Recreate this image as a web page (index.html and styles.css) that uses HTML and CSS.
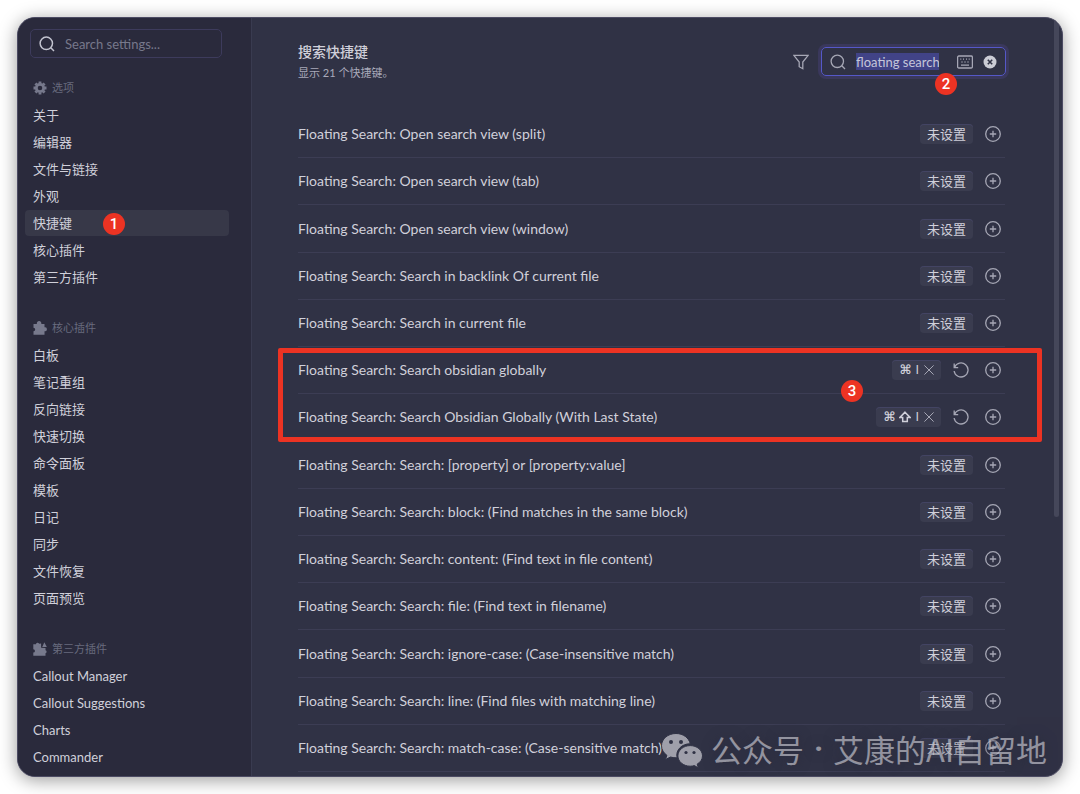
FILE: index.html
```html
<!DOCTYPE html>
<html lang="zh-CN">
<head>
<meta charset="utf-8">
<meta name="viewport" content="width=device-width, initial-scale=1">
<title>快捷键</title>
<link rel="stylesheet" href="styles.css">
</head>
<body>
<svg class="defs" aria-hidden="true">
  <symbol id="search" viewBox="0 0 16 16"><circle cx="7.3" cy="7.3" r="6.2"/><path d="M11.8 11.8 15 15"/></symbol>
  <symbol id="plus" viewBox="0 0 16 16"><circle cx="8" cy="8" r="7.3"/><path d="M8 4.8v6.4M4.8 8h6.4"/></symbol>
  <symbol id="undo" viewBox="0 0 16 16"><path d="M1.2 1.600v4h4M1.500 5.400A7 7 0 1 1 1.100 9"/></symbol>
  <symbol id="cross" viewBox="0 0 10 10"><path d="M.4.4l9.200 9.200M9.600.4.4 9.600"/></symbol>
  <symbol id="puzzle" viewBox="0 0 14 14"><path d="M.5 3h3.400a2.300 2.300 0 1 1 4.400 0h3.200v3.300a2 2 0 1 1 0 3.900v3.500H.5v-3.500a1.700 1.700 0 1 0 0-3.400z"/></symbol>
  <symbol id="puzzles" viewBox="0 0 14 14"><path d="M.3 2.300h2.600a1.700 1.700 0 0 1 3.200-.6l2-.2v4.200l4.400.3v2.300a1.500 1.500 0 0 1 0 2.900v2.500H.3v-3.100a1.600 1.600 0 0 0 0-3.300z"/><path d="M9.200 4.900 11.400.2l2.400 4.700z"/></symbol>
</svg>
<div class="window">
  <nav class="sidebar" aria-label="设置">
    <label class="side-search">
      <svg class="icon"><use href="#search"/></svg>
      <input type="search" placeholder="Search settings..." aria-label="Search settings">
    </label>
    <section class="group">
      <h2 class="group-title"><svg class="group-icon gear" viewBox="0 0 14 14"><circle cx="7" cy="7" r="3.700"/><path d="M7 .5v2M7 11.500v2M.5 7h2M11.500 7h2M2.400 2.400l1.400 1.400M10.200 10.200l1.400 1.400M2.400 11.600l1.400-1.400M10.200 3.800l1.400-1.400"/></svg>选项</h2>
      <a class="item" href="#">关于</a>
      <a class="item" href="#">编辑器</a>
      <a class="item" href="#">文件与链接</a>
      <a class="item" href="#">外观</a>
      <a class="item active" href="#" aria-current="page">快捷键<span class="badge badge-one">1</span></a>
      <a class="item" href="#">核心插件</a>
      <a class="item" href="#">第三方插件</a>
    </section>
    <section class="group">
      <h2 class="group-title"><svg class="group-icon"><use href="#puzzle"/></svg>核心插件</h2>
      <a class="item" href="#">白板</a>
      <a class="item" href="#">笔记重组</a>
      <a class="item" href="#">反向链接</a>
      <a class="item" href="#">快速切换</a>
      <a class="item" href="#">命令面板</a>
      <a class="item" href="#">模板</a>
      <a class="item" href="#">日记</a>
      <a class="item" href="#">同步</a>
      <a class="item" href="#">文件恢复</a>
      <a class="item" href="#">页面预览</a>
    </section>
    <section class="group">
      <h2 class="group-title"><svg class="group-icon"><use href="#puzzles"/></svg>第三方插件</h2>
      <a class="item" href="#">Callout Manager</a>
      <a class="item" href="#">Callout Suggestions</a>
      <a class="item" href="#">Charts</a>
      <a class="item" href="#">Commander</a>
    </section>
  </nav>
  <main class="main">
    <header class="header">
      <div class="heading">
        <h1 class="title">搜索快捷键</h1>
        <p class="subtitle">显示 21 个快捷键。</p>
      </div>
      <button class="icon-button" aria-label="筛选"><svg class="icon" viewBox="0 0 16 16"><path d="M.8 1.300h14.400L9.800 8v6.700l-3.600-2V8z"/></svg></button>
      <div class="search">
        <svg class="icon"><use href="#search"/></svg>
        <input class="search-input" type="text" value="floating search" aria-label="搜索快捷键">
        <button class="icon-button" aria-label="键盘"><svg class="icon" viewBox="0 0 16 16"><rect x=".6" y="2" width="14.800" height="12" rx="1.200"/><path d="M3.300 5.200h1M6 5.200h1M9 5.200h1M11.700 5.200h1M4.500 8h1M7.500 8h1M10.500 8h1M4 11.200h8"/></svg></button>
        <button class="icon-button" aria-label="清除"><svg class="clear" viewBox="0 0 14 14"><circle cx="7" cy="7" r="6.500"/><path d="M4.800 4.800l4.400 4.400M9.200 4.800 4.800 9.200"/></svg></button>
        <span class="badge badge-two">2</span>
      </div>
    </header>
    <ul class="list">
      <li class="row"><span class="name">Floating Search: Open search view (split)</span><span class="key">未设置</span><button class="icon-button" aria-label="添加"><svg class="icon"><use href="#plus"/></svg></button></li>
      <li class="row"><span class="name">Floating Search: Open search view (tab)</span><span class="key">未设置</span><button class="icon-button" aria-label="添加"><svg class="icon"><use href="#plus"/></svg></button></li>
      <li class="row"><span class="name">Floating Search: Open search view (window)</span><span class="key">未设置</span><button class="icon-button" aria-label="添加"><svg class="icon"><use href="#plus"/></svg></button></li>
      <li class="row"><span class="name">Floating Search: Search in backlink Of current file</span><span class="key">未设置</span><button class="icon-button" aria-label="添加"><svg class="icon"><use href="#plus"/></svg></button></li>
      <li class="row"><span class="name">Floating Search: Search in current file</span><span class="key">未设置</span><button class="icon-button" aria-label="添加"><svg class="icon"><use href="#plus"/></svg></button></li>
      <li class="row marked"><span class="name">Floating Search: Search obsidian globally</span><span class="key combo"><span>⌘</span><span class="letter">I</span><button class="icon-button" aria-label="删除"><svg class="cross"><use href="#cross"/></svg></button></span><button class="icon-button undo" aria-label="还原"><svg class="icon"><use href="#undo"/></svg></button><button class="icon-button" aria-label="添加"><svg class="icon"><use href="#plus"/></svg></button><span class="marker"><span class="badge badge-three">3</span></span></li>
      <li class="row"><span class="name">Floating Search: Search Obsidian Globally (With Last State)</span><span class="key combo"><span>⌘</span><svg class="shift" role="img" aria-label="Shift" viewBox="0 0 12 12"><path d="M6 1.200 11 6.400H8.300v4.200H3.700V6.400H1z"/></svg><span class="letter">I</span><button class="icon-button" aria-label="删除"><svg class="cross"><use href="#cross"/></svg></button></span><button class="icon-button undo" aria-label="还原"><svg class="icon"><use href="#undo"/></svg></button><button class="icon-button" aria-label="添加"><svg class="icon"><use href="#plus"/></svg></button></li>
      <li class="row"><span class="name">Floating Search: Search: [property] or [property:value]</span><span class="key">未设置</span><button class="icon-button" aria-label="添加"><svg class="icon"><use href="#plus"/></svg></button></li>
      <li class="row"><span class="name">Floating Search: Search: block: (Find matches in the same block)</span><span class="key">未设置</span><button class="icon-button" aria-label="添加"><svg class="icon"><use href="#plus"/></svg></button></li>
      <li class="row"><span class="name">Floating Search: Search: content: (Find text in file content)</span><span class="key">未设置</span><button class="icon-button" aria-label="添加"><svg class="icon"><use href="#plus"/></svg></button></li>
      <li class="row"><span class="name">Floating Search: Search: file: (Find text in filename)</span><span class="key">未设置</span><button class="icon-button" aria-label="添加"><svg class="icon"><use href="#plus"/></svg></button></li>
      <li class="row"><span class="name">Floating Search: Search: ignore-case: (Case-insensitive match)</span><span class="key">未设置</span><button class="icon-button" aria-label="添加"><svg class="icon"><use href="#plus"/></svg></button></li>
      <li class="row"><span class="name">Floating Search: Search: line: (Find files with matching line)</span><span class="key">未设置</span><button class="icon-button" aria-label="添加"><svg class="icon"><use href="#plus"/></svg></button></li>
      <li class="row"><span class="name">Floating Search: Search: match-case: (Case-sensitive match)</span><span class="key">未设置</span><button class="icon-button" aria-label="添加"><svg class="icon"><use href="#plus"/></svg></button></li>
    </ul>
    <div class="scrollbar"></div>
  </main>
  <div class="watermark">
    <svg class="wechat" viewBox="0 0 42 36"><path d="M15 .5C6.900.5.5 6 .5 12.800c0 3.900 2.100 7.200 5.400 9.500l-1.400 4.200 5-2.500c1.700.5 3.500.8 5.500.8h1.100c-1.900-7.700 4.900-14.300 13.200-14C27.900 4.800 22.200.5 15 .5z"/><path d="M41.500 22.900c0-5.700-5.500-10.300-12.300-10.300S16.900 17.200 16.900 22.900s5.500 10.300 12.300 10.300c1.500 0 2.900-.2 4.200-.6l3.900 2.300-1.100-3.800c3.200-1.900 5.300-4.800 5.300-8.200z"/><g class="eyes"><circle cx="10" cy="9" r="2"/><circle cx="20" cy="9" r="2"/><circle cx="25" cy="19.500" r="1.600"/><circle cx="33" cy="19.500" r="1.600"/></g></svg>
    <span>公众号</span><span class="dot">·</span><span>艾康的AI自留地</span>
  </div>
</div>
</body>
</html>
```
FILE: styles.css
```css
* { box-sizing: border-box; }

body {
  margin: 0;
  height: 100vh;
  padding: 17px;
  background: #fff;
  color: #d0d0da;
  font-family: Lato, "Noto Sans CJK SC", sans-serif;
  font-size: 14px;
  line-height: 20px;
  overflow: hidden;
}

.defs { position: absolute; width: 0; height: 0; }

.window {
  position: relative;
  display: flex;
  height: 100%;
  overflow: hidden;
  border: 1px solid #4c4b63;
  border-radius: 18px;
  background: #303245;
  box-shadow: 0 3px 18px rgba(0, 0, 0, 0.4);
}

svg { display: block; flex: none; fill: none; stroke: currentColor; }
.icon { width: 16px; height: 16px; color: #a6a7b5; stroke-width: 1.3; }

.icon-button {
  display: flex;
  padding: 0;
  border: 0;
  background: none;
  color: inherit;
}

input {
  min-width: 0;
  padding: 0;
  border: 0;
  outline: 0;
  background: none;
  color: inherit;
  font: inherit;
}

.sidebar {
  flex: none;
  width: 234px;
  padding: 11px 22px 0 7px;
  border-right: 1px solid #393b50;
  background: #2a2a3c;
  font-size: 13px;
}

.side-search {
  display: flex;
  align-items: center;
  gap: 10px;
  height: 29px;
  margin: 0 7px 18px 5px;
  padding: 0 8px;
  border: 1px solid #3d3b5c;
  border-radius: 5px;
}
.side-search .icon { color: #c2c3cf; stroke-width: 1.5; }
.side-search input { width: 100%; }
.side-search input::placeholder { color: #77788b; opacity: 1; }

.group { margin-bottom: 26px; }
.group-title {
  display: flex;
  align-items: center;
  gap: 5px;
  height: 24px;
  margin: 0 0 2px;
  padding: 0 8px;
  color: #686a7e;
  font-size: 11px;
  font-weight: 400;
}
.group-icon { width: 14px; height: 14px; fill: #77798c; stroke: none; }
.gear { fill: none; stroke: #77798c; stroke-width: 2.8; }

.item {
  position: relative;
  display: block;
  height: 26px;
  margin-bottom: 1px;
  padding: 0 8px;
  border-radius: 4px;
  color: inherit;
  line-height: 26px;
  text-decoration: none;
}
.active { background: #373848; }

.badge {
  position: absolute;
  width: 22px;
  height: 22px;
  border-radius: 50%;
  background: #ec3323;
  color: #fff;
  font: 500 15px/22px Roboto, sans-serif;
  text-align: center;
}
.badge-one { left: 78px; top: 3px; }
.badge-two { right: 48px; top: 25px; }
.badge-three { right: 174px; top: 27px; }

.main {
  position: relative;
  display: flex;
  flex: 1;
  flex-direction: column;
  min-width: 0;
  padding: 0 57px 4px 46px;
}

.header { display: flex; flex: none; gap: 12px; height: 93px; margin-right: -1px; padding-top: 29px; }
.heading { flex: 1; }
.title { margin: -5px 0 0; font-size: 14px; font-weight: 500; line-height: 20px; }
.subtitle { margin: 2px 0 0; color: #a9aaba; font-size: 11px; line-height: 18px; }
.header > .icon-button { height: 29px; align-items: center; }

.search {
  position: relative;
  display: flex;
  align-items: center;
  gap: 10px;
  width: 185px;
  height: 29px;
  padding: 0 8px;
  border: 1px solid #5558c8;
  border-radius: 5px;
  box-shadow: 0 0 0 3px #3a385c;
  font-size: 13px;
}
.search-input {
  flex: none;
  width: 83px;
  height: 17px;
  margin-right: auto;
  background: #414387;
  color: #c5c6da;
}
.clear { width: 14px; height: 14px; fill: #cbccd5; stroke: none; }
.clear path { stroke: #303245; stroke-width: 1.6; }

.list {
  display: flex;
  flex: 1;
  flex-direction: column;
  margin: 0;
  padding: 0;
  list-style: none;
}
.row {
  position: relative;
  display: flex;
  flex: 1;
  align-items: center;
  gap: 12px;
  min-height: 47px;
  padding-right: 4px;
  border-bottom: 1px solid #3c3d54;
}
.marked { z-index: 1; }
.name { flex: 1; }
.undo { margin-right: 4px; }

.key {
  display: flex;
  align-items: center;
  height: 20px;
  padding: 0 7px;
  border-radius: 4px;
  background: #3a3c4f;
  box-shadow: inset 0 1px 0 #434463;
  font-size: 13px;
  line-height: 18px;
}
.combo { gap: 4px; font: 700 13px/20px "DejaVu Sans", sans-serif; }
.letter { font: 400 12px/20px "DejaVu Sans", sans-serif; }
.shift { width: 12px; height: 12px; stroke-width: 1.5; }
.cross { width: 10px; height: 10px; margin-left: 1px; color: #a6a7b5; }

.marker {
  position: absolute;
  inset: 1px -37px calc(-100% - 2px) -20px;
  border: 5px solid #ec3323;
  border-radius: 2px;
  pointer-events: none;
}

.scrollbar {
  position: absolute;
  top: 0;
  right: 3px;
  width: 5px;
  height: 499px;
  border-radius: 0 0 3px 3px;
  background: #45475a;
}

.watermark {
  position: absolute;
  right: 15px;
  bottom: 7px;
  display: flex;
  align-items: center;
  gap: 8px;
  color: #b4b4be;
  font: 31px/40px "Noto Sans CJK SC", sans-serif;
  white-space: nowrap;
  text-shadow: 0 0 12px #29293a;
  opacity: 0.75;
  pointer-events: none;
}
.watermark span { margin-top: -3px; }
.dot { width: 13px; font-family: Roboto, sans-serif; font-weight: 700; text-align: center; }
.wechat { width: 42px; height: 36px; fill: #c4c4cc; stroke: #303245; stroke-width: 1; }
.eyes { fill: #303245; stroke: none; }
```
